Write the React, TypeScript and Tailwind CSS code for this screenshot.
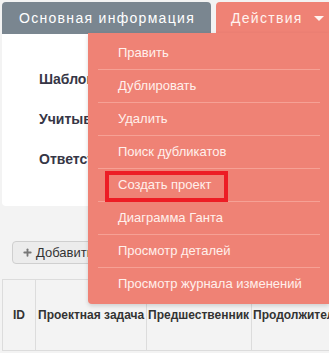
import { Plus } from 'lucide-react';

const MENU_ITEMS = [
  'Править',
  'Дублировать',
  'Удалить',
  'Поиск дубликатов',
  'Создать проект',
  'Диаграмма Ганта',
  'Просмотр деталей',
  'Просмотр журнала изменений',
];

const FIELDS = ['Шаблон проекта', 'Учитывать выходные', 'Ответственный'];

const COLUMNS = ['Проектная задача', 'Предшественник', 'Продолжительность'];

export default function App() {
  return (
    <div
      className="relative w-[329px] h-[353px] overflow-hidden bg-[#f3f3f3]"
      style={{ fontFamily: '"Liberation Sans", Arial, sans-serif' }}
    >
      {/* вкладки */}
      <div className="flex gap-[5px] pt-[2px] pl-[2px] h-[34px]">
        <div className="w-[209px] shrink-0 bg-[#7a8690] rounded-t-[4px] flex items-center pl-[17px] text-[14px] tracking-[1.3px] text-white">
          Основная информация
        </div>
        <div className="flex-1 bg-[#ef8275] rounded-tl-[4px] flex items-center pl-[15px] text-[14px] tracking-[1.3px] text-[#fff3ef] whitespace-nowrap">
          Действия
          <span className="ml-[11px] w-0 h-0 border-l-[5px] border-r-[5px] border-t-[5px] border-l-transparent border-r-transparent border-t-[#fff3ef]" />
        </div>
      </div>

      {/* основная панель */}
      <div className="mx-[2px] h-[172px] bg-white rounded-b-[4px] pl-[37px] pt-[38px] flex flex-col gap-[26px]">
        {FIELDS.map((f) => (
          <div key={f} className="text-[14px] leading-[14px] font-bold text-[#363646] whitespace-nowrap">
            {f}
          </div>
        ))}
      </div>

      <div className="pl-[12px] pt-[35px]">
        <button className="h-[23px] pl-[9px] pr-[10px] flex items-center gap-[3px] bg-[#ececec] border border-[#cfcfcf] rounded-[4px] text-[13px] text-[#333]">
          <Plus className="w-[11px] h-[11px] text-[#777]" strokeWidth={4} />
          Добавить задачу
        </button>
      </div>

      {/* таблица */}
      <div className="mt-[15px] ml-[2px] flex h-[72px] border-t border-b border-l border-[#dcdcdc] text-[12px] font-bold text-[#333]">
        <div className="w-[33px] shrink-0 border-r border-[#dcdcdc] flex items-center justify-center">ID</div>
        <div className="w-[111px] shrink-0 border-r border-[#dcdcdc] flex items-center pl-[2px] whitespace-nowrap">
          {COLUMNS[0]}
        </div>
        <div className="w-[105px] shrink-0 border-r border-[#dcdcdc] flex items-center pl-[1px] whitespace-nowrap">
          {COLUMNS[1]}
        </div>
        <div className="flex-1 flex items-center pl-[1px] whitespace-nowrap overflow-hidden">{COLUMNS[2]}</div>
      </div>

      {/* выпадающее меню */}
      <div className="absolute left-[88px] top-[33px] right-0 bg-[#ef8275] rounded-bl-[4px] pt-[4px] pb-[4px] shadow-[0_2px_4px_rgba(0,0,0,0.15)]">
        {MENU_ITEMS.map((item, i) => (
          <div key={item}>
            {i > 0 && <div className="mx-[10px] mr-[9px] h-px bg-[#f6a195]" />}
            <div className="h-[32px] flex items-center pl-[30px] text-[13px] text-[#fff0ec] whitespace-nowrap">
              {item}
            </div>
          </div>
        ))}
        <div className="absolute left-[17px] top-[138px] w-[123px] h-[31px] border-[4px] border-[#ed1c24]" />
      </div>
    </div>
  );
}
